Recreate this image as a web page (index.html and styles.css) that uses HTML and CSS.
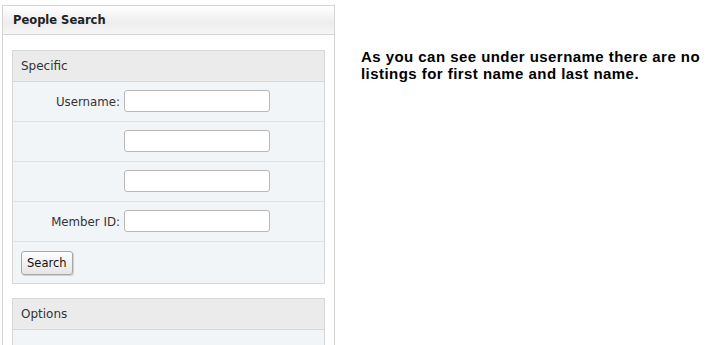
FILE: index.html
```html
<!DOCTYPE html>
<html lang="en">

<head>
    <meta charset="utf-8">
    <title>People Search</title>
    <link rel="stylesheet" href="styles.css">
</head>

<body>
    <div class="page">
        <!-- Search panel -->
        <div class="panel">
            <div class="panel-head">People Search</div>
            <div class="panel-body">
                <div class="box">
                    <div class="box-head">Specific</div>
                    <div class="row">
                        <label>Username:</label>
                        <input type="text" class="field">
                    </div>
                    <div class="row">
                        <label></label>
                        <input type="text" class="field">
                    </div>
                    <div class="row">
                        <label></label>
                        <input type="text" class="field">
                    </div>
                    <div class="row">
                        <label>Member ID:</label>
                        <input type="text" class="field">
                    </div>
                    <div class="row row-btn">
                        <button class="btn">Search</button>
                    </div>
                </div>

                <div class="box">
                    <div class="box-head">Options</div>
                    <div class="row"></div>
                </div>
            </div>
        </div>

        <!-- Note -->
        <p class="note">As you can see under username there are no<br>listings for first name and last name.</p>
    </div>
</body>

</html>
```

FILE: styles.css
```css
body {
    margin: 0;
    background-color: white;
    overflow: hidden;
    font-family: "DejaVu Sans", Verdana, sans-serif;
    font-size: 11px;
    color: #333;
}

.page {
    display: flex;
    align-items: flex-start;
    padding: 5px 0 0 2px;
    height: 100vh;
    box-sizing: border-box;
}

.panel {
    width: 333px;
    height: 100%;
    border: 1px solid #d4d4d4;
    border-bottom: none;
    box-sizing: border-box;
    overflow: hidden;
    flex-shrink: 0;
}

.panel-head {
    height: 28px;
    line-height: 28px;
    padding-left: 10px;
    font-weight: bold;
    font-size: 11.5px;
    color: #222;
    background: linear-gradient(#ffffff, #ededed 60%, #f6f6f6);
    border-bottom: 1px solid #d4d4d4;
}

.panel-body {
    padding: 15px 9px 0 9px;
    display: flex;
    flex-direction: column;
    gap: 14px;
}

.box {
    border: 1px solid #d8d8d8;
    background-color: #f2f5f8;
}

.box-head {
    height: 30px;
    line-height: 30px;
    padding-left: 8px;
    font-size: 12px;
    color: #333;
    background-color: #ebebeb;
    border-bottom: 1px solid #d8d8d8;
}

.row {
    height: 39px;
    display: flex;
    align-items: center;
    border-bottom: 1px solid #e0e3e6;
}

.row:last-child {
    border-bottom: none;
}

.row label {
    width: 107px;
    text-align: right;
    padding-right: 4px;
    flex-shrink: 0;
    font-size: 11.8px;
    color: #333;
}

.field {
    width: 142px;
    height: 18px;
    margin: 0;
    margin-top: -1px;
    border: 1px solid #b9b9b9;
    border-radius: 3px;
    background-color: white;
    padding: 1px;
}

.row-btn {
    height: 41px;
    padding-left: 8px;
}

.btn {
    height: 24px;
    padding: 0 5px;
    font-family: "DejaVu Sans", Verdana, sans-serif;
    font-size: 11.5px;
    color: #111;
    border: 1px solid #a8a8a8;
    border-radius: 3px;
    background: linear-gradient(#fdfdfd, #e6e6e6);
    box-shadow: 1px 1px 0 #d0d0d0;
}

.note {
    margin: 43px 0 0 26px;
    font-family: "Liberation Sans", Arial, sans-serif;
    font-weight: bold;
    font-size: 15px;
    line-height: 17px;
    letter-spacing: 0.45px;
    color: black;
}
```
